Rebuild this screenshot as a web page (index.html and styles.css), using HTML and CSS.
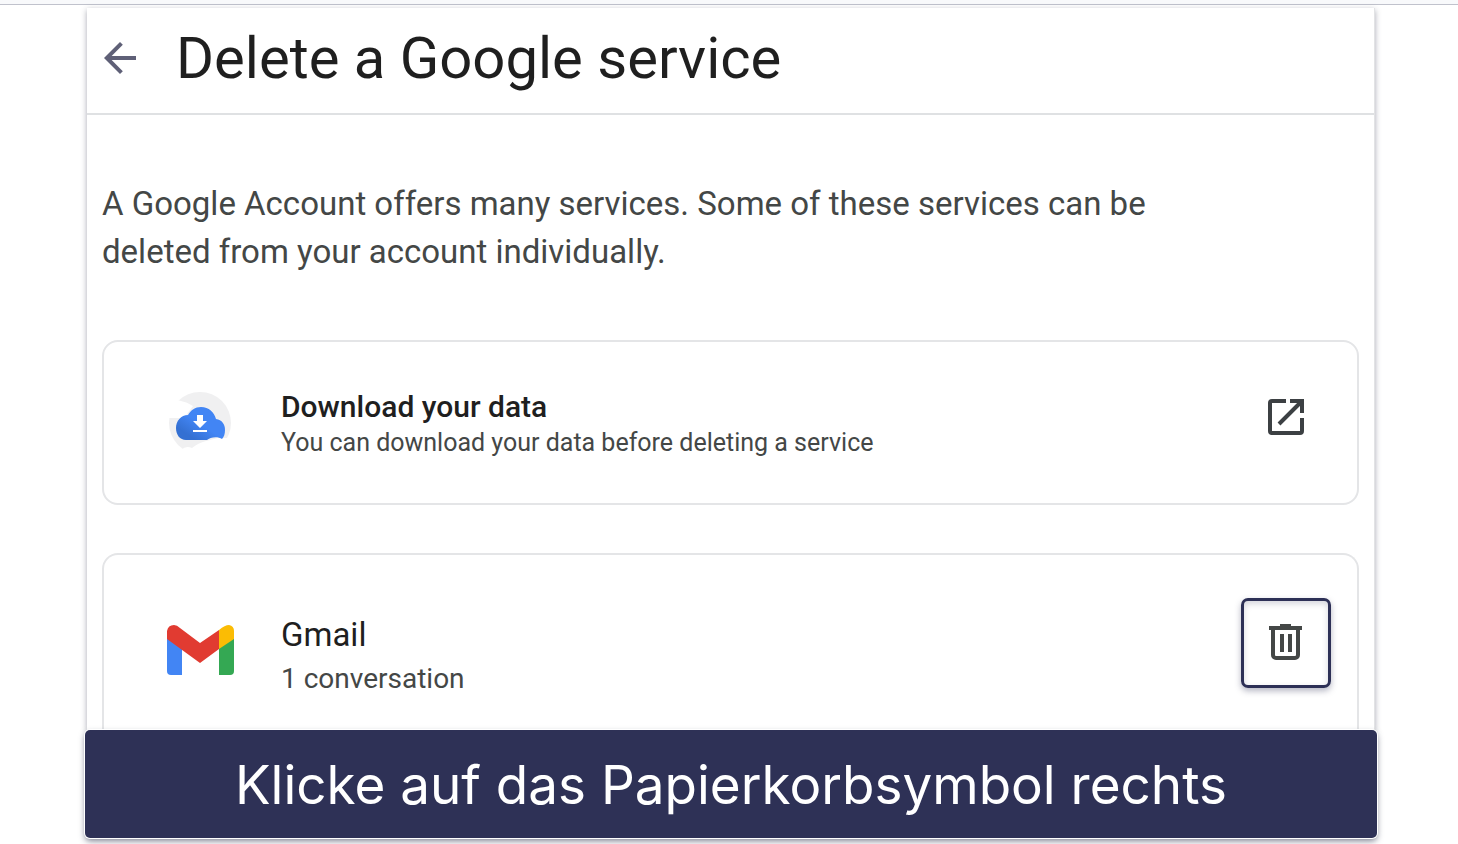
FILE: index.html
```html
<!DOCTYPE html>
<html lang="en">
<head>
    <meta charset="UTF-8">
    <title>Delete a Google service</title>
    <link rel="stylesheet" href="styles.css">
</head>
<body>
    <div class="top-strip"></div>
    <div class="container">
        <main class="panel">
            <header class="header">
                <button class="icon-btn" aria-label="Back">
                    <svg width="48" height="48" viewBox="0 0 24 24" fill="#5f6077"><path d="M20 11H7.83l5.59-5.59L12 4l-8 8 8 8 1.41-1.41L7.83 13H20z"/></svg>
                </button>
                <h1>Delete a Google service</h1>
            </header>

            <div class="content">
                <p class="intro">A Google Account offers many services. Some of these services can be deleted from your account individually.</p>

                <!-- Download -->
                <section class="card">
                    <svg class="logo" width="68" height="68" viewBox="0 0 68 68">
                        <defs>
                            <linearGradient id="cloud" x1="0" y1="1" x2="1" y2="0">
                                <stop offset="0.2" stop-color="#3470d2"/>
                                <stop offset="0.5" stop-color="#4285f4"/>
                            </linearGradient>
                        </defs>
                        <circle cx="34" cy="34" r="31" fill="#f0f0f1"/>
                        <path d="M0 29h18l9-12q-6-4-12-5Q8 9 0 19zM15 61q5-5 11-2 6-5 14-7l12-3h16v20H20z" fill="#fff"/>
                        <path d="M20 51C14 51 10 46 10 39s5-13 12-13c3-5 7-8 13-8 8 0 13 5 15 12 6 1 9 5 9 11 0 4-1 7-3 9-4-3-12-2-15 1z" fill="url(#cloud)"/>
                        <path d="M31 26h6v6h4l-7 7-7-7h4zM27 41h14v2H27z" fill="#fff"/>
                    </svg>
                    <div class="card-text">
                        <h2 class="card-title strong">Download your data</h2>
                        <p class="card-note small">You can download your data before deleting a service</p>
                    </div>
                    <a class="icon-btn open-link" href="#" aria-label="Open download page">
                        <svg width="48" height="48" viewBox="0 0 48 48" fill="none" stroke="#3c4043" stroke-width="4">
                            <path d="M25 7H11a2 2 0 0 0-2 2v28a2 2 0 0 0 2 2h28a2 2 0 0 0 2-2V24M29 7h12v12M41 7 18 30"/>
                        </svg>
                    </a>
                </section>

                <!-- Gmail -->
                <section class="card card-last">
                    <svg class="logo" width="68" height="52" viewBox="0 0 68 52">
                        <path d="M1 13h15v38H5q-4 0-4-4z" fill="#4285f4"/>
                        <path d="M53 13h15v34q0 4-4 4H53z" fill="#34a853"/>
                        <path d="M53 6q6-5 10-5 5 1 5 6v8L53 25z" fill="#fbbc04"/>
                        <path d="M1 15V7q1-6 7-6 3 0 6 3l20 15L53 6v19L34 39z" fill="#e13b31"/>
                    </svg>
                    <div class="card-text">
                        <h2 class="card-title">Gmail</h2>
                        <p class="card-note">1 conversation</p>
                    </div>
                    <button class="icon-btn delete-btn" aria-label="Delete Gmail">
                        <svg width="36" height="42" viewBox="0 0 36 42" fill="none" stroke="#444746" stroke-width="4">
                            <path d="M1 6h33M12 4h11M5 6v27a3 3 0 0 0 3 3h19a3 3 0 0 0 3-3V6M14 12v18M22 12v18"/>
                        </svg>
                    </button>
                </section>
            </div>
        </main>
        <div class="banner" lang="de">Klicke auf das Papierkorbsymbol rechts</div>
    </div>
</body>
</html>
```
FILE: styles.css
```css
* {
    box-sizing: border-box;
}
body {
    min-height: 100vh;
    margin: 0;
    background: white;
    font-family: Roboto, "Liberation Sans", sans-serif;
    color: #1f1f1f;
}
h1, h2, p {
    margin: 0;
    font-weight: 400;
}
.top-strip {
    height: 5px;
    background: #f8f9fb;
    border-bottom: 1px solid #c0c2cc;
}
.container {
    margin: 3px 81px 0 85px;
    padding-bottom: 6px;
}
.panel {
    margin: 0 2px;
    border-right: 1px solid #e2e3e5;
    box-shadow: 0 2px 6px rgba(40, 44, 70, 0.4);
}
.header {
    display: flex;
    align-items: center;
    gap: 32px;
    height: 107px;
    padding: 0 9px 5px;
    border-bottom: 2px solid #dfe1e3;
}
h1 {
    font-size: 58px;
    line-height: 64px;
}
.icon-btn {
    display: flex;
    align-items: center;
    justify-content: center;
    padding: 0;
    border: none;
    background: none;
    cursor: pointer;
}
.content {
    padding: 65px 15px 0;
}
.intro {
    max-width: 1100px;
    margin-bottom: 64px;
    font-size: 33px;
    line-height: 48px;
    color: #444746;
}
.card {
    display: flex;
    align-items: center;
    height: 165px;
    margin-bottom: 48px;
    padding: 0 28px 0 62px;
    border: 2px solid #e4e5e7;
    border-radius: 16px;
}
.card-last {
    height: 177px;
    margin-bottom: 0;
    padding-top: 14px;
    border-bottom: none;
    border-radius: 16px 16px 0 0;
}
.logo {
    flex-shrink: 0;
}
.card-text {
    flex: 1;
    margin-left: 47px;
    padding-top: 4px;
}
.card-last .card-text {
    padding-top: 14px;
}
.card-title {
    font-size: 33px;
    line-height: 44px;
}
.card-note {
    font-size: 28px;
    line-height: 44px;
    color: #444746;
}
.strong {
    font-size: 30px;
    font-weight: 500;
    line-height: 36px;
}
.small {
    font-size: 25px;
    line-height: 36px;
}
.open-link {
    width: 88px;
    padding-bottom: 10px;
}
.delete-btn {
    width: 90px;
    height: 90px;
    margin: 0 -2px 14px 0;
    border: 3px solid #2d3056;
    border-radius: 7px;
    box-shadow: 0 3px 6px rgba(45, 48, 86, 0.35), inset 0 3px 6px rgba(45, 48, 86, 0.2);
}
.banner {
    position: relative;
    height: 108px;
    border-radius: 5px;
    background: #2e3156;
    box-shadow: 0 0 0 1px white, 0 3px 6px rgba(40, 44, 70, 0.6);
    font-family: Inter, sans-serif;
    font-size: 53px;
    line-height: 110px;
    text-align: center;
    color: white;
}
```
